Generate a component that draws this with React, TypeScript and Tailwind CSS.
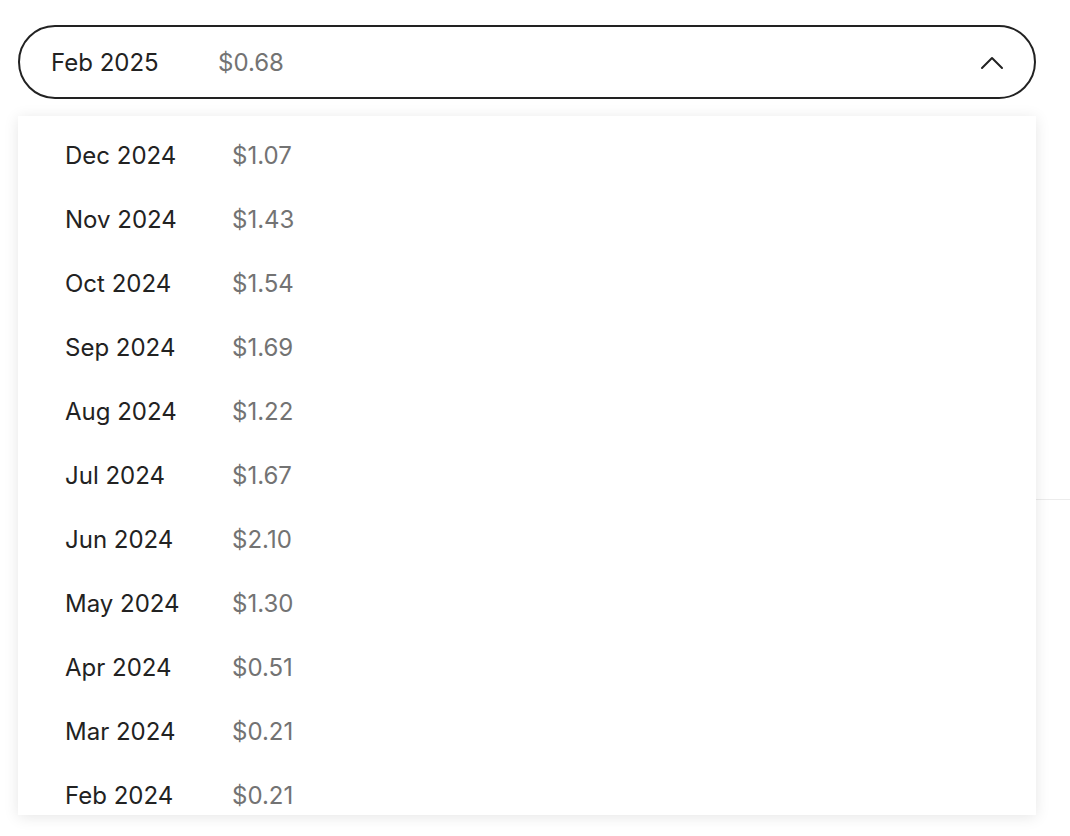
import { useState } from "react";

const months = [
    { label: "Dec 2024", cost: "$1.07" },
    { label: "Nov 2024", cost: "$1.43" },
    { label: "Oct 2024", cost: "$1.54" },
    { label: "Sep 2024", cost: "$1.69" },
    { label: "Aug 2024", cost: "$1.22" },
    { label: "Jul 2024", cost: "$1.67" },
    { label: "Jun 2024", cost: "$2.10" },
    { label: "May 2024", cost: "$1.30" },
    { label: "Apr 2024", cost: "$0.51" },
    { label: "Mar 2024", cost: "$0.21" },
    { label: "Feb 2024", cost: "$0.21" },
];

function Chevron() {
    return (
        <svg width="24" height="14" viewBox="0 0 24 14" fill="none" className="shrink-0">
            <polyline points="2,12 12,2 22,12" stroke="#222" strokeWidth="2" strokeLinecap="round" strokeLinejoin="round" />
        </svg>
    );
}

export default function App() {
    const [open, setOpen] = useState(true);

    return (
        <div className="min-h-[836px] bg-white pl-[18px] pr-[34px] pt-[25px] font-['Inter',sans-serif]">
            <div className="relative">
                <button
                    onClick={() => setOpen(!open)}
                    className="w-full h-[74px] flex items-center rounded-full border-2 border-[#222] pl-[31px] pr-[30px] pt-[2px] text-[24px]"
                >
                    <span className="w-[167px] text-left text-[#222]">Feb 2025</span>
                    <span className="text-[#737373]">$0.68</span>
                    <span className="ml-auto">
                        <Chevron />
                    </span>
                </button>

                <div className="h-[401px] border-b border-[#ececec] -mr-[34px]" />

                {open && (
                    <div className="absolute left-0 right-0 top-[91px] h-[699px] overflow-hidden bg-white shadow-[0_2px_14px_rgba(0,0,0,0.1)] pt-[8px]">
                        {months.map((m) => (
                            <div key={m.label} className="h-16 flex items-center pl-[47px] text-[24px] cursor-pointer hover:bg-gray-50">
                                <span className="w-[167px] text-[#222]">{m.label}</span>
                                <span className="text-[#737373]">{m.cost}</span>
                            </div>
                        ))}
                    </div>
                )}
            </div>
        </div>
    );
}
